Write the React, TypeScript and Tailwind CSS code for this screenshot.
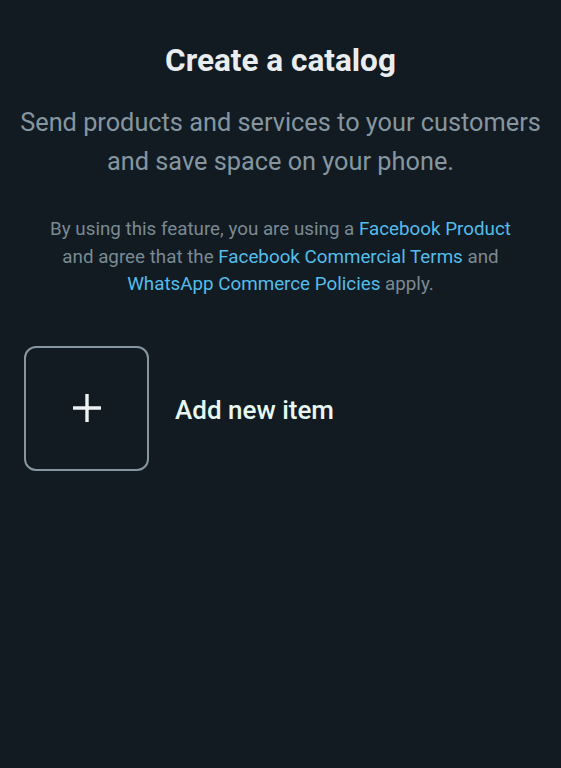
export default function App() {
  return (
    <div className="min-h-[768px] w-full bg-[#121b22] font-['Roboto',sans-serif]">
      <div className="flex flex-col items-center px-2 pt-[40px] text-center">
        <h1 className="text-[31.5px] font-bold leading-[42px] text-[#e9edef]">Create a catalog</h1>
        <p className="mt-[21px] text-[25.3px] leading-[39px] text-[#8696a0]">
          Send products and services to your customers
          <br />
          and save space on your phone.
        </p>
        <p className="mt-[35px] text-[18.8px] leading-[27.5px] text-[#7a8a93]">
          By using this feature, you are using a <span className="text-[#53bdeb]">Facebook Product</span>
          <br />
          and agree that the <span className="text-[#53bdeb]">Facebook Commercial Terms</span> and
          <br />
          <span className="text-[#53bdeb]">WhatsApp Commerce Policies</span> apply.
        </p>
      </div>

      <div className="mt-[47px] flex items-center gap-[26px] px-[24px]">
        <div className="flex h-[125px] w-[125px] items-center justify-center rounded-[12px] border-[2.5px] border-[#8696a0]">
          <svg width="32" height="32" viewBox="0 0 32 32" fill="none">
            <path d="M16 2v28M2 16h28" stroke="#eef1f2" strokeWidth="3.4" />
          </svg>
        </div>
        <span className="mt-[5px] text-[26px] font-medium text-[#e6f7f2]">Add new item</span>
      </div>
    </div>
  );
}
